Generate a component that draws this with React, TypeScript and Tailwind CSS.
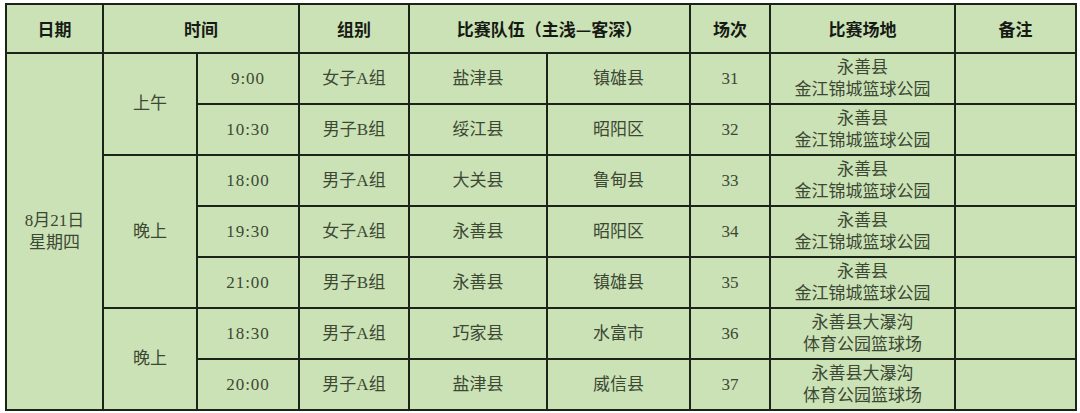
const rows = [
  { time: '9:00', group: '女子A组', home: '盐津县', away: '镇雄县', no: 31, venue: ['永善县', '金江锦城篮球公园'] },
  { time: '10:30', group: '男子B组', home: '绥江县', away: '昭阳区', no: 32, venue: ['永善县', '金江锦城篮球公园'] },
  { time: '18:00', group: '男子A组', home: '大关县', away: '鲁甸县', no: 33, venue: ['永善县', '金江锦城篮球公园'] },
  { time: '19:30', group: '女子A组', home: '永善县', away: '昭阳区', no: 34, venue: ['永善县', '金江锦城篮球公园'] },
  { time: '21:00', group: '男子B组', home: '永善县', away: '镇雄县', no: 35, venue: ['永善县', '金江锦城篮球公园'] },
  { time: '18:30', group: '男子A组', home: '巧家县', away: '水富市', no: 36, venue: ['永善县大瀑沟', '体育公园篮球场'] },
  { time: '20:00', group: '男子A组', home: '盐津县', away: '威信县', no: 37, venue: ['永善县大瀑沟', '体育公园篮球场'] },
];

// 时段分组：行下标 -> [名称, 跨行数]
const periods: Record<number, [string, number]> = {
  0: ['上午', 2],
  2: ['晚上', 3],
  5: ['晚上', 2],
};

const cell = 'border-2 border-[#1b2418] text-center align-middle p-0';
const serif = "font-['Liberation_Serif','Noto_Sans_CJK_SC',serif]";

export default function App() {
  return (
    <div className="w-[1080px] h-[413px] bg-white pt-[3px] pl-[5px]">
      <table className="table-fixed border-collapse w-[1070px] bg-[#cbe2b6] text-[#3c4834]">
        <colgroup>
          <col className="w-[97px]" />
          <col className="w-[94px]" />
          <col className="w-[102px]" />
          <col className="w-[110px]" />
          <col className="w-[138px]" />
          <col className="w-[143px]" />
          <col className="w-[80px]" />
          <col className="w-[185px]" />
          <col className="w-[121px]" />
        </colgroup>
        <thead>
          <tr className="h-[49px] font-['Noto_Sans_CJK_SC',sans-serif] font-bold text-[17px] text-[#161a14]">
            <th className={cell}>日期</th>
            <th className={cell} colSpan={2}>时间</th>
            <th className={cell}>组别</th>
            <th className={cell} colSpan={2}>比赛队伍（主浅—客深）</th>
            <th className={cell}>场次</th>
            <th className={cell}>比赛场地</th>
            <th className={cell}>备注</th>
          </tr>
        </thead>
        <tbody className={`${serif} text-[17px]`}>
          {rows.map((r, i) => (
            <tr key={r.no} className="h-[51px]">
              {i === 0 && (
                <td className={`${cell} leading-[22px]`} rowSpan={7}>
                  8月21日
                  <br />
                  星期四
                </td>
              )}
              {periods[i] && (
                <td className={cell} rowSpan={periods[i][1]}>
                  {periods[i][0]}
                </td>
              )}
              <td className={`${cell} tracking-[1px]`}>{r.time}</td>
              <td className={cell}>{r.group}</td>
              <td className={cell}>{r.home}</td>
              <td className={cell}>{r.away}</td>
              <td className={cell}>{r.no}</td>
              <td className={`${cell} leading-[22px]`}>
                {r.venue[0]}
                <br />
                {r.venue[1]}
              </td>
              <td className={cell}></td>
            </tr>
          ))}
        </tbody>
      </table>
    </div>
  );
}
